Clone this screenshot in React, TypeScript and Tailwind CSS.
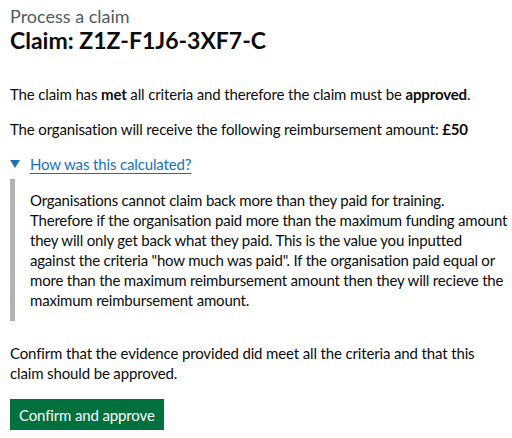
export default function App() {
  return (
    <div className="pl-[10px] pr-[2px] pt-[6px] text-[#0b0c0c] text-[15px] leading-[20px] tracking-[-0.14px]" style={{ fontFamily: 'Lato, "Liberation Sans", sans-serif' }}>
      <span className="block text-[18px] leading-[20px] text-[#505a5f] mb-[2px] tracking-normal">Process a claim</span>
      <h1 className="text-[23px] leading-[25px] font-bold mb-[31px] tracking-normal">Claim: Z1Z-F1J6-3XF7-C</h1>
      <p className="mb-[15px]">
        The claim has <strong className="font-bold">met</strong> all criteria and therefore the claim must be <strong className="font-bold">approved</strong>.
      </p>
      <p className="mb-[15px]">
        The organisation will receive the following reimbursement amount: <strong className="font-bold">£50</strong>
      </p>
      <div className="mb-[22px]">
        <div className="flex items-center mb-[5px] text-[#1d70b8] h-[20px]">
          <svg width="10" height="8" viewBox="0 0 10 8" className="mr-[10px]">
            <polygon points="0,0 10,0 5,8" fill="#1d70b8" />
          </svg>
          <span className="underline decoration-1 underline-offset-[3px] decoration-[#1d70b8]">How was this calculated?</span>
        </div>
        <div className="border-l-[5px] border-[#b1b4b6] py-[11px] pl-[15px] tracking-[-0.2px]">
          Organisations cannot claim back more than they paid for training. Therefore if the organisation paid more than the maximum funding amount they will only get back what they paid. This is the value you inputted against the criteria "how much was paid". If the organisation paid equal or more than the maximum reimbursement amount then they will recieve the maximum reimbursement amount.
        </div>
      </div>
      <p className="mb-[16px] pr-[28px]">
        Confirm that the evidence provided did meet all the criteria and that this claim should be approved.
      </p>
      <button className="bg-[#00703c] text-white px-[9px] pt-[6px] pb-[5px] shadow-[0_2px_0_#002d18] leading-[20px]">
        Confirm and approve
      </button>
    </div>
  );
}
